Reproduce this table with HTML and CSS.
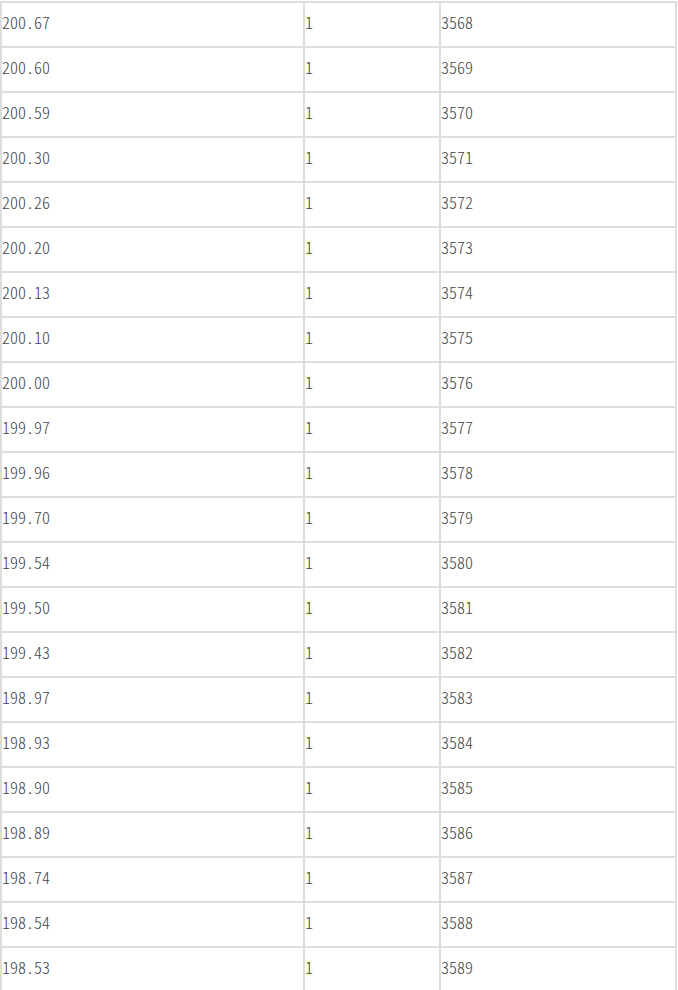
FILE: index.html
```html
<!DOCTYPE html>
<html lang="zh-CN">
<head>
<meta charset="utf-8">
<title>数据表</title>
<link rel="stylesheet" href="styles.css">
</head>
<body>
<div class="wrap">
<table class="grid">
<colgroup><col class="c1"><col class="c2"><col class="c3"></colgroup>
<tbody>
<tr><td>200.67</td><td>1</td><td>3568</td></tr>
<tr><td>200.60</td><td>1</td><td>3569</td></tr>
<tr><td>200.59</td><td>1</td><td>3570</td></tr>
<tr><td>200.30</td><td>1</td><td>3571</td></tr>
<tr><td>200.26</td><td>1</td><td>3572</td></tr>
<tr><td>200.20</td><td>1</td><td>3573</td></tr>
<tr><td>200.13</td><td>1</td><td>3574</td></tr>
<tr><td>200.10</td><td>1</td><td>3575</td></tr>
<tr><td>200.00</td><td>1</td><td>3576</td></tr>
<tr><td>199.97</td><td>1</td><td>3577</td></tr>
<tr><td>199.96</td><td>1</td><td>3578</td></tr>
<tr><td>199.70</td><td>1</td><td>3579</td></tr>
<tr><td>199.54</td><td>1</td><td>3580</td></tr>
<tr><td>199.50</td><td>1</td><td>3581</td></tr>
<tr><td>199.43</td><td>1</td><td>3582</td></tr>
<tr><td>198.97</td><td>1</td><td>3583</td></tr>
<tr><td>198.93</td><td>1</td><td>3584</td></tr>
<tr><td>198.90</td><td>1</td><td>3585</td></tr>
<tr><td>198.89</td><td>1</td><td>3586</td></tr>
<tr><td>198.74</td><td>1</td><td>3587</td></tr>
<tr><td>198.54</td><td>1</td><td>3588</td></tr>
<tr><td>198.53</td><td>1</td><td>3589</td></tr>
</tbody>
</table>
</div>
</body>
</html>
```
FILE: styles.css
```css
html { overflow: hidden; background: #fff; }
body { margin: 0; background: #fff; }
.wrap { padding-top: 1px; }
.grid {
  table-layout: fixed;
  width: 677px;
  border-collapse: separate;
  border-spacing: 0;
  border: 1px solid #dddddd;
}
.c1 { width: 303px; }
.c2 { width: 136px; }
.c3 { width: 236px; }
.grid td {
  border: 1px solid #dddddd;
  padding: 0 0 4px 0;
  line-height: 39px;
  height: auto;
  font-family: "Noto Sans CJK SC", "Liberation Mono", monospace;
  font-feature-settings: "hwid" 1;
  font-size: 16px;
  font-weight: 300;
  color: #444;
  vertical-align: middle;
  white-space: nowrap;
  overflow: hidden;
}
```
